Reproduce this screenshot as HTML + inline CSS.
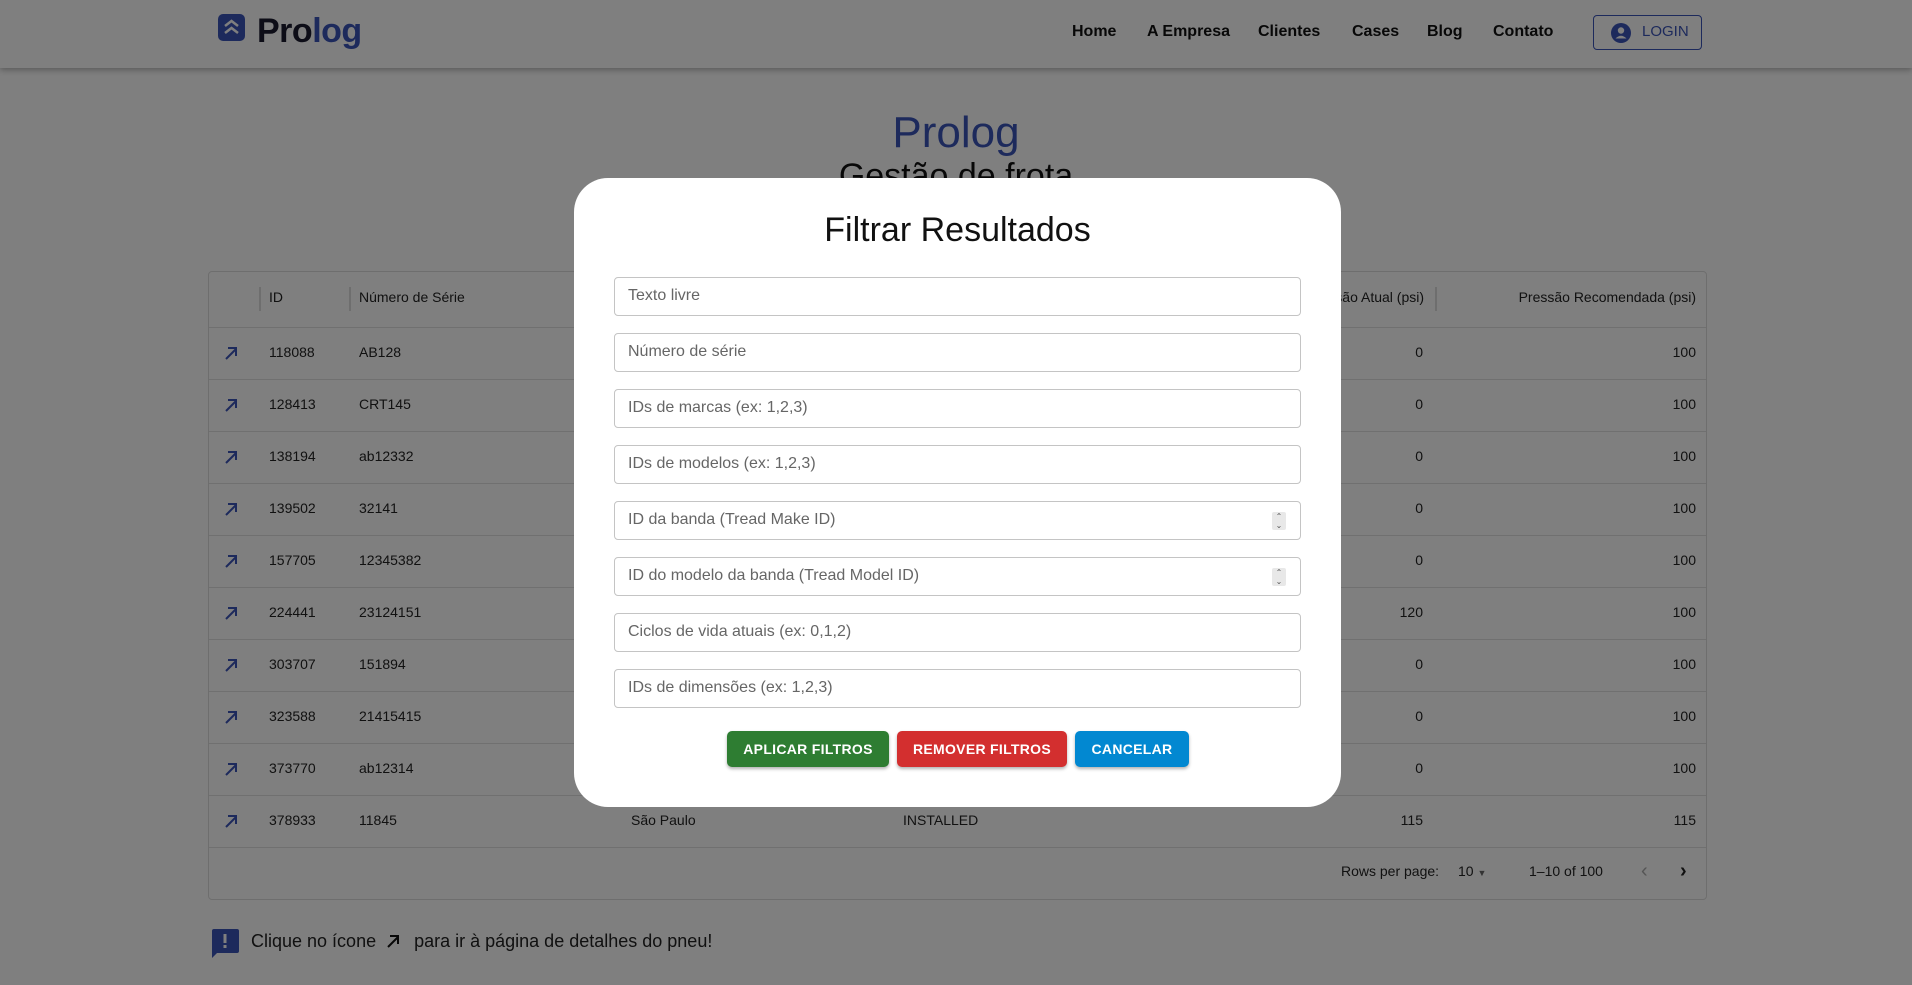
<!DOCTYPE html>
<html><head><meta charset="utf-8"><style>
*{margin:0;padding:0;box-sizing:border-box}
body{width:1912px;height:985px;overflow:hidden;background:#fff;font-family:"Liberation Sans",sans-serif;position:relative;color:#222}
.a{position:absolute;white-space:nowrap}
.nav{position:absolute;left:0;top:0;width:1912px;height:68px;background:#fff;box-shadow:0 2px 6px rgba(0,0,0,.3)}
.ni{position:absolute;top:23px;font-size:16px;font-weight:bold;color:#111}
.tbl{position:absolute;left:208px;top:271px;width:1499px;height:629px;border:1px solid #ddd;border-radius:4px}
.row{position:absolute;left:0;width:1497px;height:52px;border-bottom:1px solid #e0e0e0;font-size:14px}
.row span{position:absolute;top:16px}
.r{text-align:right}
.ov{position:absolute;left:0;top:0;width:1912px;height:985px;background:rgba(0,0,0,.5)}
.modal{position:absolute;left:574px;top:178px;width:767px;height:629px;background:#fff;border-radius:34px}
.inp{position:absolute;left:40px;width:687px;height:39px;border:1px solid #c4c4c4;border-radius:4px;font-size:16px;color:#666;padding:9px 13px}
.sp{position:absolute;right:14px;top:10px;width:14px;height:18px;background:#e8e8e8;border-radius:2px;font-size:8px;line-height:9px;text-align:center;color:#555}
.btn{position:absolute;top:554px;height:36px;border-radius:5px;color:#fff;font-size:14px;font-weight:bold;text-align:center;line-height:36px;box-shadow:0 2px 3px rgba(0,0,0,.3);letter-spacing:.3px}
</style></head><body>
<div class="nav">
<svg class="a" style="left:218px;top:14px" width="27" height="27" viewBox="0 0 27 27"><rect width="27" height="27" rx="5" fill="#3a54b8"/><path d="M7 12 L13.5 7 L20 12 M7 19 L13.5 14 L20 19" stroke="#fff" stroke-width="2.5" fill="none"/></svg>
<div class="a" style="left:257px;top:12px;font-size:34px;font-weight:bold;color:#1a1a2e;letter-spacing:-0.5px">Pro<span style="color:#3a54b8">log</span></div>
<div class="ni" style="left:1072px">Home</div>
<div class="ni" style="left:1147px">A Empresa</div>
<div class="ni" style="left:1258px">Clientes</div>
<div class="ni" style="left:1352px">Cases</div>
<div class="ni" style="left:1427px">Blog</div>
<div class="ni" style="left:1493px">Contato</div>
<div class="a" style="left:1593px;top:15px;width:109px;height:35px;border:1px solid #3a54b8;border-radius:4px;color:#3a54b8;font-size:15px">
<svg class="a" style="left:17px;top:7px" width="20" height="20" viewBox="0 0 20 20"><circle cx="10" cy="10" r="10" fill="#3a54b8"/><circle cx="10" cy="7.5" r="3.2" fill="#fff"/><path d="M4.5 15.5 Q10 10 15.5 15.5" fill="#fff"/></svg>
<span class="a" style="left:48px;top:7px">LOGIN</span></div>
</div>
<div class="a" style="left:0;width:1912px;text-align:center;top:108px;font-size:44px;color:#3a54b8">Prolog</div>
<div class="a" style="left:0;width:1912px;text-align:center;top:157px;font-size:34px;color:#111">Gestão de frota</div>
<div class="tbl">
<div class="row" style="top:0;height:56px;font-size:14px"><span style="left:60px;top:17px">ID</span><span style="left:150px;top:17px">Número de Série</span><span class="r" style="right:282px;top:17px">Pressão Atual (psi)</span><span class="r" style="right:10px;top:17px">Pressão Recomendada (psi)</span>
<div class="a" style="left:50px;top:15px;width:2px;height:24px;background:#ddd"></div><div class="a" style="left:140px;top:15px;width:2px;height:24px;background:#ddd"></div><div class="a" style="left:1226px;top:15px;width:2px;height:24px;background:#ddd"></div></div>
<div id="rows"></div>
<div class="a" style="left:1132px;top:591px;font-size:14px">Rows per page:</div>
<div class="a" style="left:1249px;top:591px;font-size:14px">10 <span style="font-size:9px;color:#666">▼</span></div>
<div class="a" style="left:1320px;top:591px;font-size:14px">1–10 of 100</div>
<div class="a" style="left:1432px;top:588px;font-size:20px;color:#aaa">‹</div>
<div class="a" style="left:1471px;top:588px;font-size:20px;color:#222;font-weight:bold">›</div>
</div>
<svg class="a" style="left:211px;top:929px" width="28" height="29" viewBox="0 0 28 29"><path d="M2 0H26Q28 0 28 2V22Q28 24 26 24H6L1 29V2Q1 0 3 0Z" fill="#3a54b8"/><rect x="12.5" y="5" width="3" height="9" fill="#fff"/><rect x="12.5" y="16" width="3" height="3" fill="#fff"/></svg>
<div class="a" style="left:251px;top:931px;font-size:18px;color:#222">Clique no ícone <svg width="16" height="16" viewBox="0 0 16 16" style="vertical-align:-2px;margin:0 8px 0 4px"><path d="M3 14 L13 4 M5 3 H13 V11" stroke="#111" stroke-width="2" fill="none"/></svg> para ir à página de detalhes do pneu!</div>
<div class="ov"></div>
<div class="modal">
<div class="a" style="left:0;width:767px;text-align:center;top:33px;font-size:34px;color:#111">Filtrar Resultados</div>
<div class="inp" style="top:99px">Texto livre</div>
<div class="inp" style="top:155px">Número de série</div>
<div class="inp" style="top:211px">IDs de marcas (ex: 1,2,3)</div>
<div class="inp" style="top:267px">IDs de modelos (ex: 1,2,3)</div>
<div class="inp" style="top:323px">ID da banda (Tread Make ID)<div class="sp">⌃<br>⌄</div></div>
<div class="inp" style="top:379px">ID do modelo da banda (Tread Model ID)<div class="sp">⌃<br>⌄</div></div>
<div class="inp" style="top:435px">Ciclos de vida atuais (ex: 0,1,2)</div>
<div class="inp" style="top:491px">IDs de dimensões (ex: 1,2,3)</div>
<div class="btn" style="left:153px;width:162px;background:#2e7d32;top:553px">APLICAR FILTROS</div>
<div class="btn" style="left:323px;width:170px;background:#d32f2f;top:553px">REMOVER FILTROS</div>
<div class="btn" style="left:501px;width:114px;background:#0288d1;top:553px">CANCELAR</div>
</div>
<script>
var d=[["118088","AB128","0","100"],["128413","CRT145","0","100"],["138194","ab12332","0","100"],["139502","32141","0","100"],["157705","12345382","0","100"],["224441","23124151","120","100"],["303707","151894","0","100"],["323588","21415415","0","100"],["373770","ab12314","0","100"],["378933","11845","115","115"]];
var h="";d.forEach(function(r,i){var t=56+i*52;h+='<div class="row" style="top:'+t+'px"><svg style="position:absolute;left:14px;top:17px" width="16" height="16" viewBox="0 0 16 16"><path d="M3 14 L13 4 M5 3 H13 V11" stroke="#3a54b8" stroke-width="2" fill="none"/></svg><span style="left:60px">'+r[0]+'</span><span style="left:150px">'+r[1]+'</span>'+(i==9?'<span style="left:422px">São Paulo</span><span style="left:694px">INSTALLED</span>':'')+'<span style="right:283px">'+r[2]+'</span><span style="right:10px">'+r[3]+'</span></div>';});
document.getElementById("rows").innerHTML=h;
</script>
</body></html>
